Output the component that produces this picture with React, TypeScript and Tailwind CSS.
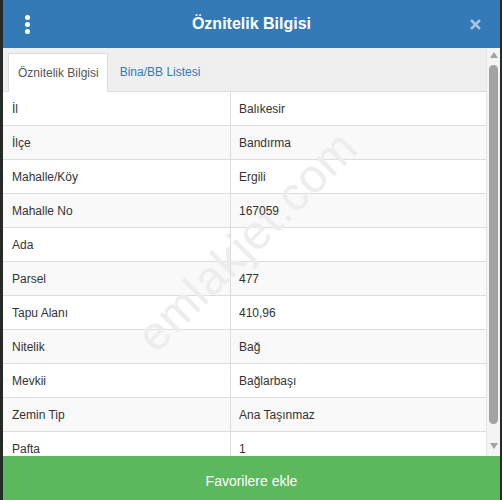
import { X } from "lucide-react";

const rows: [string, string][] = [
  ["İl", "Balıkesir"],
  ["İlçe", "Bandırma"],
  ["Mahalle/Köy", "Ergili"],
  ["Mahalle No", "167059"],
  ["Ada", ""],
  ["Parsel", "477"],
  ["Tapu Alanı", "410,96"],
  ["Nitelik", "Bağ"],
  ["Mevkii", "Bağlarbaşı"],
  ["Zemin Tip", "Ana Taşınmaz"],
  ["Pafta", "1"],
];

export default function App() {
  return (
    <div
      className="w-[502px] h-[500px] bg-[#262a24] pl-[3px] pr-[2px] overflow-hidden"
      style={{ fontFamily: '"Liberation Sans", Arial, sans-serif' }}
    >
      <div className="h-full flex flex-col bg-white">
        {/* header */}
        <div className="h-[48px] shrink-0 bg-[#337ab7] flex items-center justify-between px-[20px] relative">
          <div className="flex flex-col gap-[2px] items-center w-[8px]">
            <span className="w-[5px] h-[5px] rounded-full bg-white" />
            <span className="w-[5px] h-[5px] rounded-full bg-white" />
            <span className="w-[5px] h-[5px] rounded-full bg-white" />
          </div>
          <h1 className="text-white font-bold text-[16px] absolute left-0 right-0 text-center pointer-events-none">
            Öznitelik Bilgisi
          </h1>
          <X className="w-[15px] h-[15px] text-[#a9c4de] mr-[-3px]" strokeWidth={4} />
        </div>

        {/* body */}
        <div className="flex-1 flex overflow-hidden relative">
          <div className="flex-1 flex flex-col">
            <div className="h-[44px] shrink-0 bg-[#efefef] border-b border-[#ddd] flex items-end pl-[5px] pt-[5px]">
              <div className="h-[39px] pl-[9px] pr-[8px] flex items-center bg-white border border-b-0 border-[#ddd] text-[12px] text-[#555] -mb-px">
                Öznitelik Bilgisi
              </div>
              <div className="h-[38px] px-[12px] flex items-center text-[12px] text-[#337ab7]">
                Bina/BB Listesi
              </div>
            </div>
            <div className="flex flex-col">
              {rows.map(([k, v], i) => (
                <div
                  key={k}
                  className={`h-[34px] shrink-0 flex border-b border-[#ddd] text-[12px] text-[#333] ${
                    i % 2 === 1 ? "bg-[#f9f9f9]" : "bg-white"
                  }`}
                >
                  <div className="relative z-[1] w-[228px] pl-[9px] flex items-center border-r border-[#ddd]">{k}</div>
                  <div className="relative z-[1] flex-1 pl-[8px] flex items-center">{v}</div>
                </div>
              ))}
            </div>
          </div>

          {/* scrollbar */}
          <div className="w-[14px] shrink-0 bg-[#f4f4f4] border-l border-[#e6e6e6] flex flex-col items-center pt-[4px]">
            <svg width="8" height="6" viewBox="0 0 8 6" className="shrink-0">
              <path d="M4 0 L8 6 L0 6 Z" fill="#a3a3a3" />
            </svg>
            <div className="w-[9px] h-[359px] mt-[7px] rounded-full bg-[#a3a3a3] shrink-0" />
            <svg width="8" height="6" viewBox="0 0 8 6" className="shrink-0 mt-[19px]">
              <path d="M0 0 L8 0 L4 6 Z" fill="#a3a3a3" />
            </svg>
          </div>

          {/* watermark */}
          <div className="absolute z-0 left-[244px] top-[193px] -translate-x-1/2 -translate-y-1/2 -rotate-[45deg] text-[47px] text-[#ededed] whitespace-nowrap pointer-events-none select-none tracking-[1px]">
            emlakjet.com
          </div>
        </div>

        {/* footer button */}
        <button className="h-[44px] shrink-0 bg-[#5cb85c] text-white text-[14px] flex items-center justify-center pt-[6px]">
          Favorilere ekle
        </button>
      </div>
    </div>
  );
}
